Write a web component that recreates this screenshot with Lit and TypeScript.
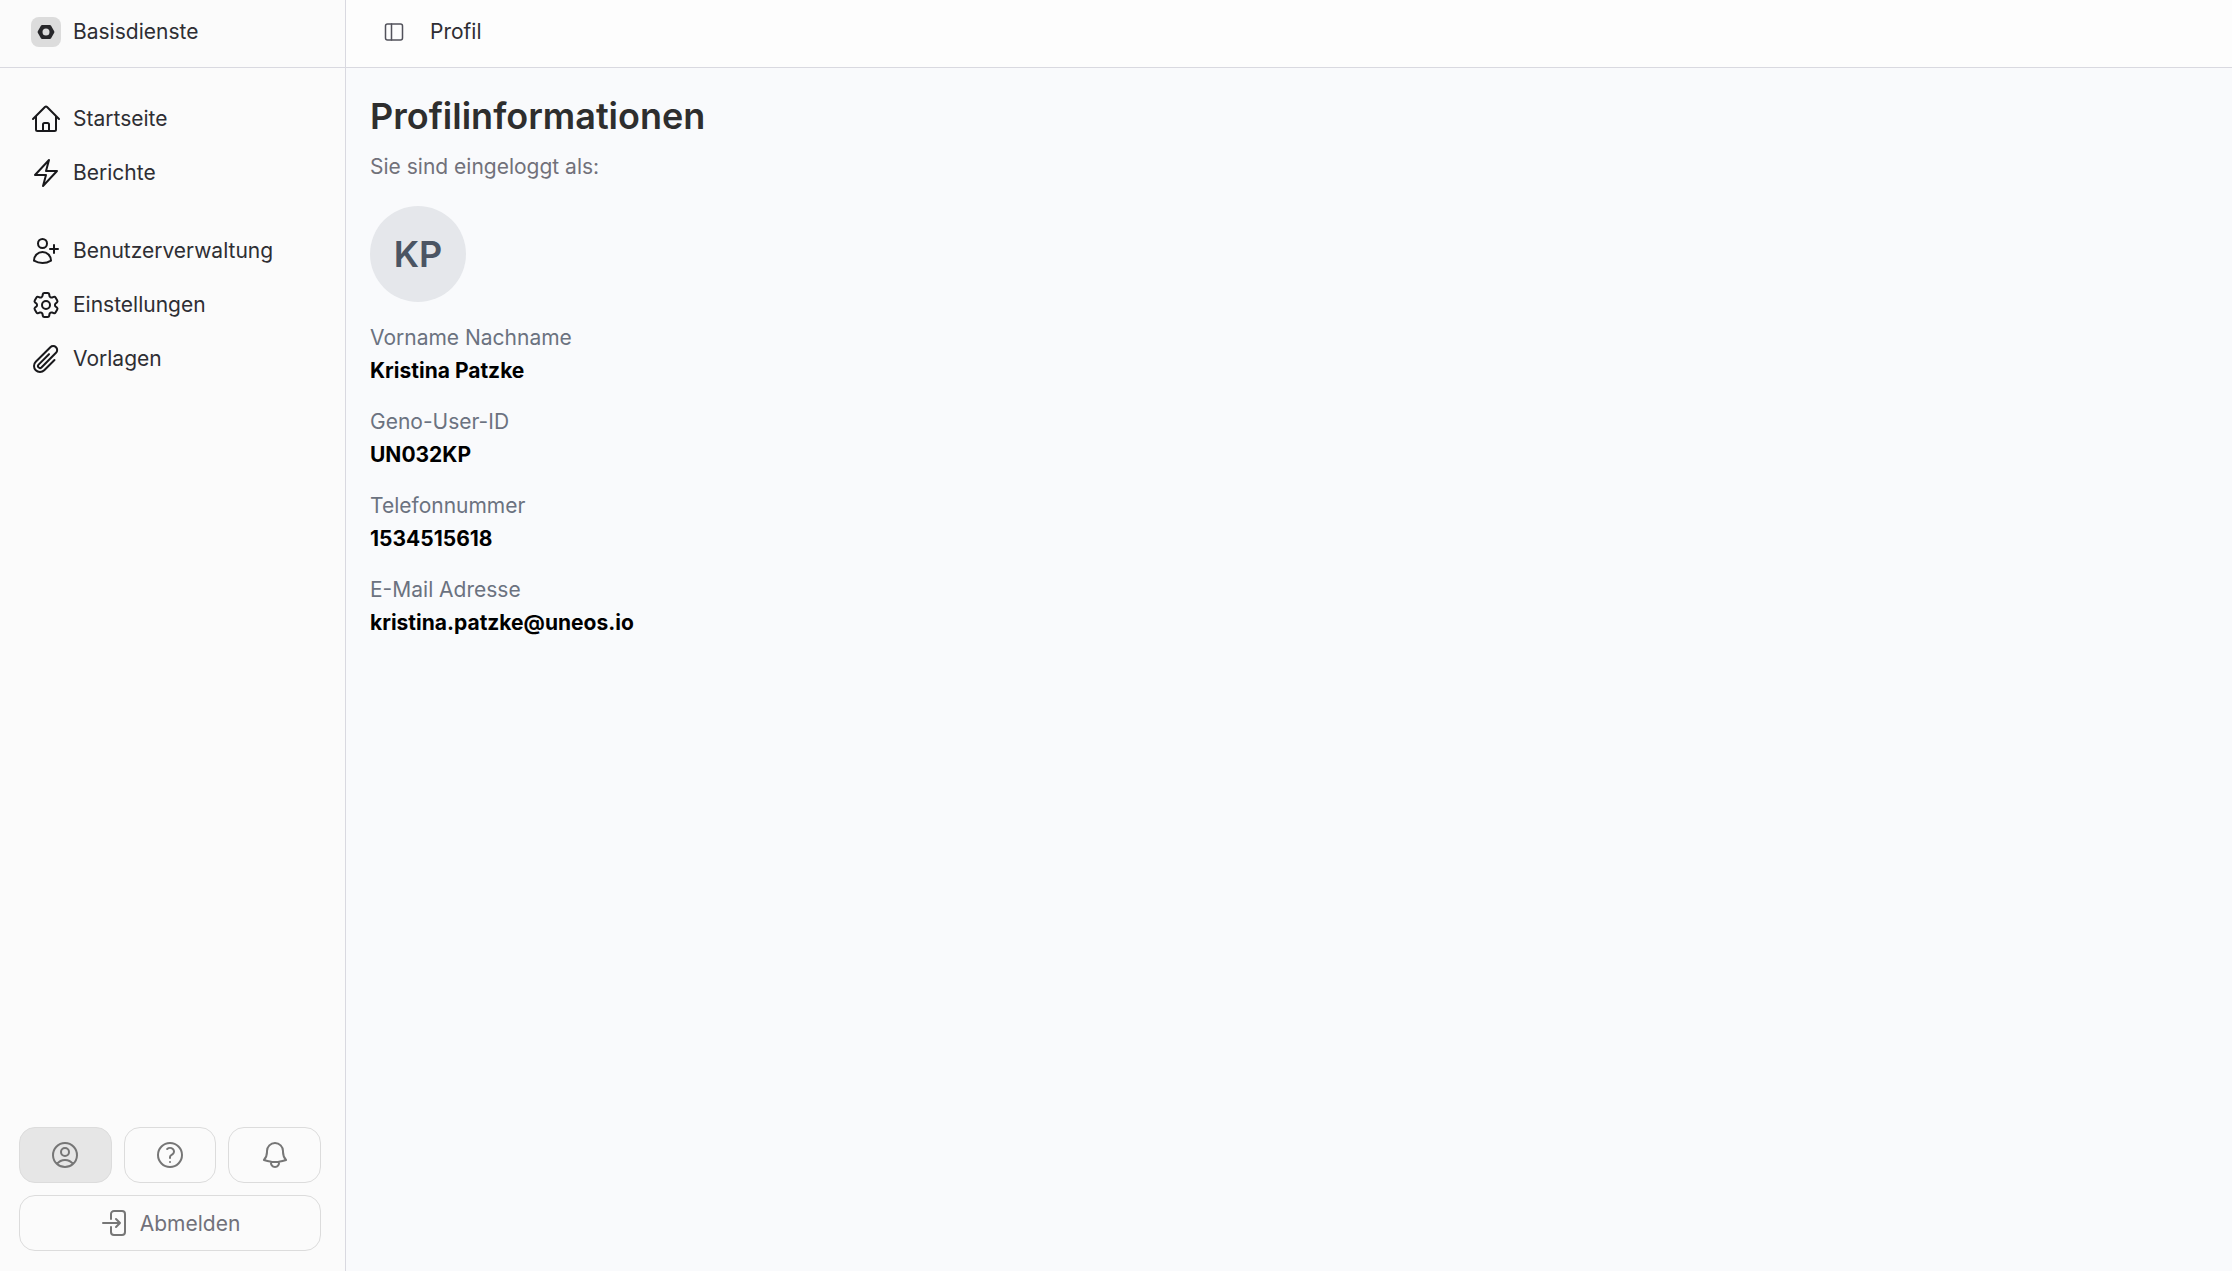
import { LitElement, html, css, svg } from "lit";
import { customElement } from "lit/decorators.js";

const P = {
  home: "m2.25 12 8.954-8.955c.44-.439 1.152-.439 1.591 0L21.75 12M4.5 9.75v10.125c0 .621.504 1.125 1.125 1.125H9.75v-4.875c0-.621.504-1.125 1.125-1.125h2.25c.621 0 1.125.504 1.125 1.125V21h4.125c.621 0 1.125-.504 1.125-1.125V9.75M8.25 21h8.25",
  bolt: "m3.75 13.5 10.5-11.25L12 10.5h8.25L9.75 21.75 12 13.5H3.75Z",
  userPlus: "M18 7.5v3m0 0v3m0-3h3m-3 0h-3m-2.25-4.125a3.375 3.375 0 1 1-6.75 0 3.375 3.375 0 0 1 6.75 0ZM3 19.235v-.11a6.375 6.375 0 0 1 12.75 0v.109A12.318 12.318 0 0 1 9.374 21c-2.331 0-4.512-.645-6.374-1.766Z",
  cog: "M9.594 3.94c.09-.542.56-.94 1.11-.94h2.593c.55 0 1.02.398 1.11.94l.213 1.281c.063.374.313.686.645.87.074.04.147.083.22.127.325.196.72.257 1.075.124l1.217-.456a1.125 1.125 0 0 1 1.37.49l1.296 2.247a1.125 1.125 0 0 1-.26 1.431l-1.003.827c-.293.241-.438.613-.43.992a7.723 7.723 0 0 1 0 .255c-.008.378.137.75.43.991l1.004.827c.424.35.534.955.26 1.43l-1.298 2.247a1.125 1.125 0 0 1-1.369.491l-1.217-.456c-.355-.133-.75-.072-1.076.124a6.47 6.47 0 0 1-.22.128c-.331.183-.581.495-.644.869l-.213 1.281c-.09.543-.56.94-1.11.94h-2.594c-.55 0-1.019-.398-1.11-.94l-.213-1.281c-.062-.374-.312-.686-.644-.87a6.52 6.52 0 0 1-.22-.127c-.325-.196-.72-.257-1.076-.124l-1.217.456a1.125 1.125 0 0 1-1.369-.49l-1.297-2.247a1.125 1.125 0 0 1 .26-1.431l1.004-.827c.292-.24.437-.613.43-.991a6.932 6.932 0 0 1 0-.255c.007-.38-.138-.751-.43-.992l-1.004-.827a1.125 1.125 0 0 1-.26-1.43l1.297-2.247a1.125 1.125 0 0 1 1.37-.491l1.216.456c.356.133.751.072 1.076-.124.072-.044.146-.086.22-.128.332-.183.582-.495.644-.869l.214-1.28ZM15 12a3 3 0 1 1-6 0 3 3 0 0 1 6 0Z",
  clip: "m18.375 12.739-7.693 7.693a4.5 4.5 0 0 1-6.364-6.364l10.94-10.94A3 3 0 1 1 19.5 7.372L8.552 18.32m.009-.01-.01.01m5.699-9.941-7.81 7.81a1.5 1.5 0 0 0 2.112 2.13",
  userCircle: "M17.982 18.725A7.488 7.488 0 0 0 12 15.75a7.488 7.488 0 0 0-5.982 2.975m11.963 0a9 9 0 1 0-11.963 0m11.963 0A8.966 8.966 0 0 1 12 21a8.966 8.966 0 0 1-5.982-2.275M15 9.75a3 3 0 1 1-6 0 3 3 0 0 1 6 0Z",
  help: "M9.879 7.519c1.171-1.025 3.071-1.025 4.242 0 1.172 1.025 1.172 2.687 0 3.712-.203.179-.43.326-.67.442-.745.361-1.45.999-1.45 1.827v.75M21 12a9 9 0 1 1-18 0 9 9 0 0 1 18 0Zm-9 5.25h.008v.008H12v-.008Z",
  bell: "M14.857 17.082a23.848 23.848 0 0 0 5.454-1.31A8.967 8.967 0 0 1 18 9.75V9A6 6 0 0 0 6 9v.75a8.967 8.967 0 0 1-2.312 6.022c1.733.64 3.56 1.085 5.455 1.31m5.714 0a24.255 24.255 0 0 1-5.714 0m5.714 0a3 3 0 1 1-5.714 0",
  logout: "M8.25 9V5.25A2.25 2.25 0 0 1 10.5 3h6a2.25 2.25 0 0 1 2.25 2.25v13.5A2.25 2.25 0 0 1 16.5 21h-6a2.25 2.25 0 0 1-2.25-2.25V15M12 9l3 3m0 0-3 3m3-3H2.25",
};

const icon = (d: string, cls = "nav-icon") =>
  html`<svg class=${cls} viewBox="0 0 24 24" fill="none" stroke="currentColor" stroke-width="1.5" stroke-linecap="round" stroke-linejoin="round">${svg`<path d=${d}></path>`}</svg>`;

const FIELDS = [
  ["Vorname Nachname", "Kristina Patzke"],
  ["Geno-User-ID", "UN032KP"],
  ["Telefonnummer", "1534515618"],
  ["E-Mail Adresse", "kristina.patzke@uneos.io"],
];

@customElement("app-root")
export class AppRoot extends LitElement {
  static styles = css`
    :host {
      display: grid;
      grid-template-columns: 346px 1fr;
      grid-template-rows: 68px 1fr;
      height: 1271px;
      font-family: Inter, "Liberation Sans", sans-serif;
      font-size: 21px;
      line-height: 28px;
      color: #2e2e33;
      background: #f9fafc;
    }
    .brand {
      display: flex;
      align-items: center;
      gap: 12px;
      padding: 0 0 3px 31px;
      background: #fbfbfb;
      border-right: 1px solid #d9d9e0;
      border-bottom: 1px solid #d9d9e0;
    }
    .tile {
      width: 30px;
      height: 30px;
      border-radius: 8px;
      background: #dcdcdc;
      display: flex;
      align-items: center;
      justify-content: center;
    }
    .tile svg { width: 20px; height: 20px; display: block; }
    .topbar {
      display: flex;
      align-items: center;
      gap: 24px;
      padding: 0 0 3px 36px;
      background: #fdfdfd;
      border-bottom: 1px solid #d9d9e0;
    }
    .panel { width: 24px; height: 24px; color: #52525b; display: block; }
    aside {
      display: flex;
      flex-direction: column;
      background: #fbfbfb;
      border-right: 1px solid #d9d9e0;
      padding: 24px 24px 20px 19px;
      min-height: 0;
    }
    nav { display: flex; flex-direction: column; }
    nav + nav { margin-top: 24px; }
    .item {
      display: flex;
      align-items: center;
      gap: 11px;
      height: 54px;
      padding-left: 11px;
    }
    .nav-icon { width: 32px; height: 32px; color: #18181b; flex: none; display: block; }
    .spacer { flex: 1; }
    .footer { display: flex; flex-direction: column; gap: 12px; }
    .row { display: grid; grid-template-columns: repeat(3, 1fr); gap: 12px; }
    .btn {
      box-sizing: border-box;
      height: 56px;
      border: 1px solid #dcdcdc;
      border-radius: 16px;
      display: flex;
      align-items: center;
      justify-content: center;
      gap: 8px;
      background: #fbfbfb;
      color: #71717a;
      padding-top: 1px;
    }
    .btn.active { background: #e6e6e6; }
    .btn-icon { width: 32px; height: 32px; display: block; color: #767676; margin-top: -1px; }
    main { padding: 24px 24px 0; min-width: 0; }
    h1 {
      margin: 0;
      font-size: 36px;
      line-height: 48px;
      font-weight: 600;
      color: #2e2e2e;
    }
    .sub { margin-top: 13px; color: #71717a; }
    .avatar {
      width: 96px;
      height: 96px;
      border-radius: 50%;
      margin-top: 25px;
      background: #e5e7eb;
      color: #4b5563;
      font-size: 36px;
      font-weight: 600;
      display: flex;
      align-items: center;
      justify-content: center;
    }
    .fields { margin-top: 22px; display: flex; flex-direction: column; gap: 23px; }
    .label { color: #6b7280; line-height: 28px; }
    .value { color: #000; font-weight: 700; line-height: 28px; margin-top: 5px; }
  `;

  render() {
    return html`
      <div class="brand">
        <div class="tile">
          <svg viewBox="0 0 20 20"><path fill-rule="evenodd" fill="#27272a" d="M6.2 3h7.6a1.5 1.5 0 0 1 1.3.75l3.1 5.5a1.5 1.5 0 0 1 0 1.5l-3.1 5.5a1.5 1.5 0 0 1-1.3.75H6.2a1.5 1.5 0 0 1-1.3-.75l-3.1-5.5a1.5 1.5 0 0 1 0-1.5l3.1-5.5A1.5 1.5 0 0 1 6.2 3ZM10 6.5a3.5 3.5 0 1 0 0 7 3.5 3.5 0 0 0 0-7Z"></path></svg>
        </div>
        <span>Basisdienste</span>
      </div>
      <div class="topbar">
        <svg class="panel" viewBox="0 0 24 24" fill="none" stroke="currentColor" stroke-width="1.5" stroke-linecap="round" stroke-linejoin="round"><rect x="3.5" y="4" width="17" height="16" rx="2"></rect><path d="M9.5 4v16"></path></svg>
        <span>Profil</span>
      </div>
      <aside>
        <nav>
          <div class="item">${icon(P.home)}<span>Startseite</span></div>
          <div class="item">${icon(P.bolt)}<span>Berichte</span></div>
        </nav>
        <nav>
          <div class="item">${icon(P.userPlus)}<span>Benutzerverwaltung</span></div>
          <div class="item">${icon(P.cog)}<span>Einstellungen</span></div>
          <div class="item">${icon(P.clip)}<span>Vorlagen</span></div>
        </nav>
        <div class="spacer"></div>
        <div class="footer">
          <div class="row">
            <div class="btn active">${icon(P.userCircle, "btn-icon")}</div>
            <div class="btn">${icon(P.help, "btn-icon")}</div>
            <div class="btn">${icon(P.bell, "btn-icon")}</div>
          </div>
          <div class="btn">${icon(P.logout, "btn-icon")}<span>Abmelden</span></div>
        </div>
      </aside>
      <main>
        <h1>Profilinformationen</h1>
        <div class="sub">Sie sind eingeloggt als:</div>
        <div class="avatar">KP</div>
        <div class="fields">
          ${FIELDS.map(([l, v]) => html`<div><div class="label">${l}</div><div class="value">${v}</div></div>`)}
        </div>
      </main>
    `;
  }
}
